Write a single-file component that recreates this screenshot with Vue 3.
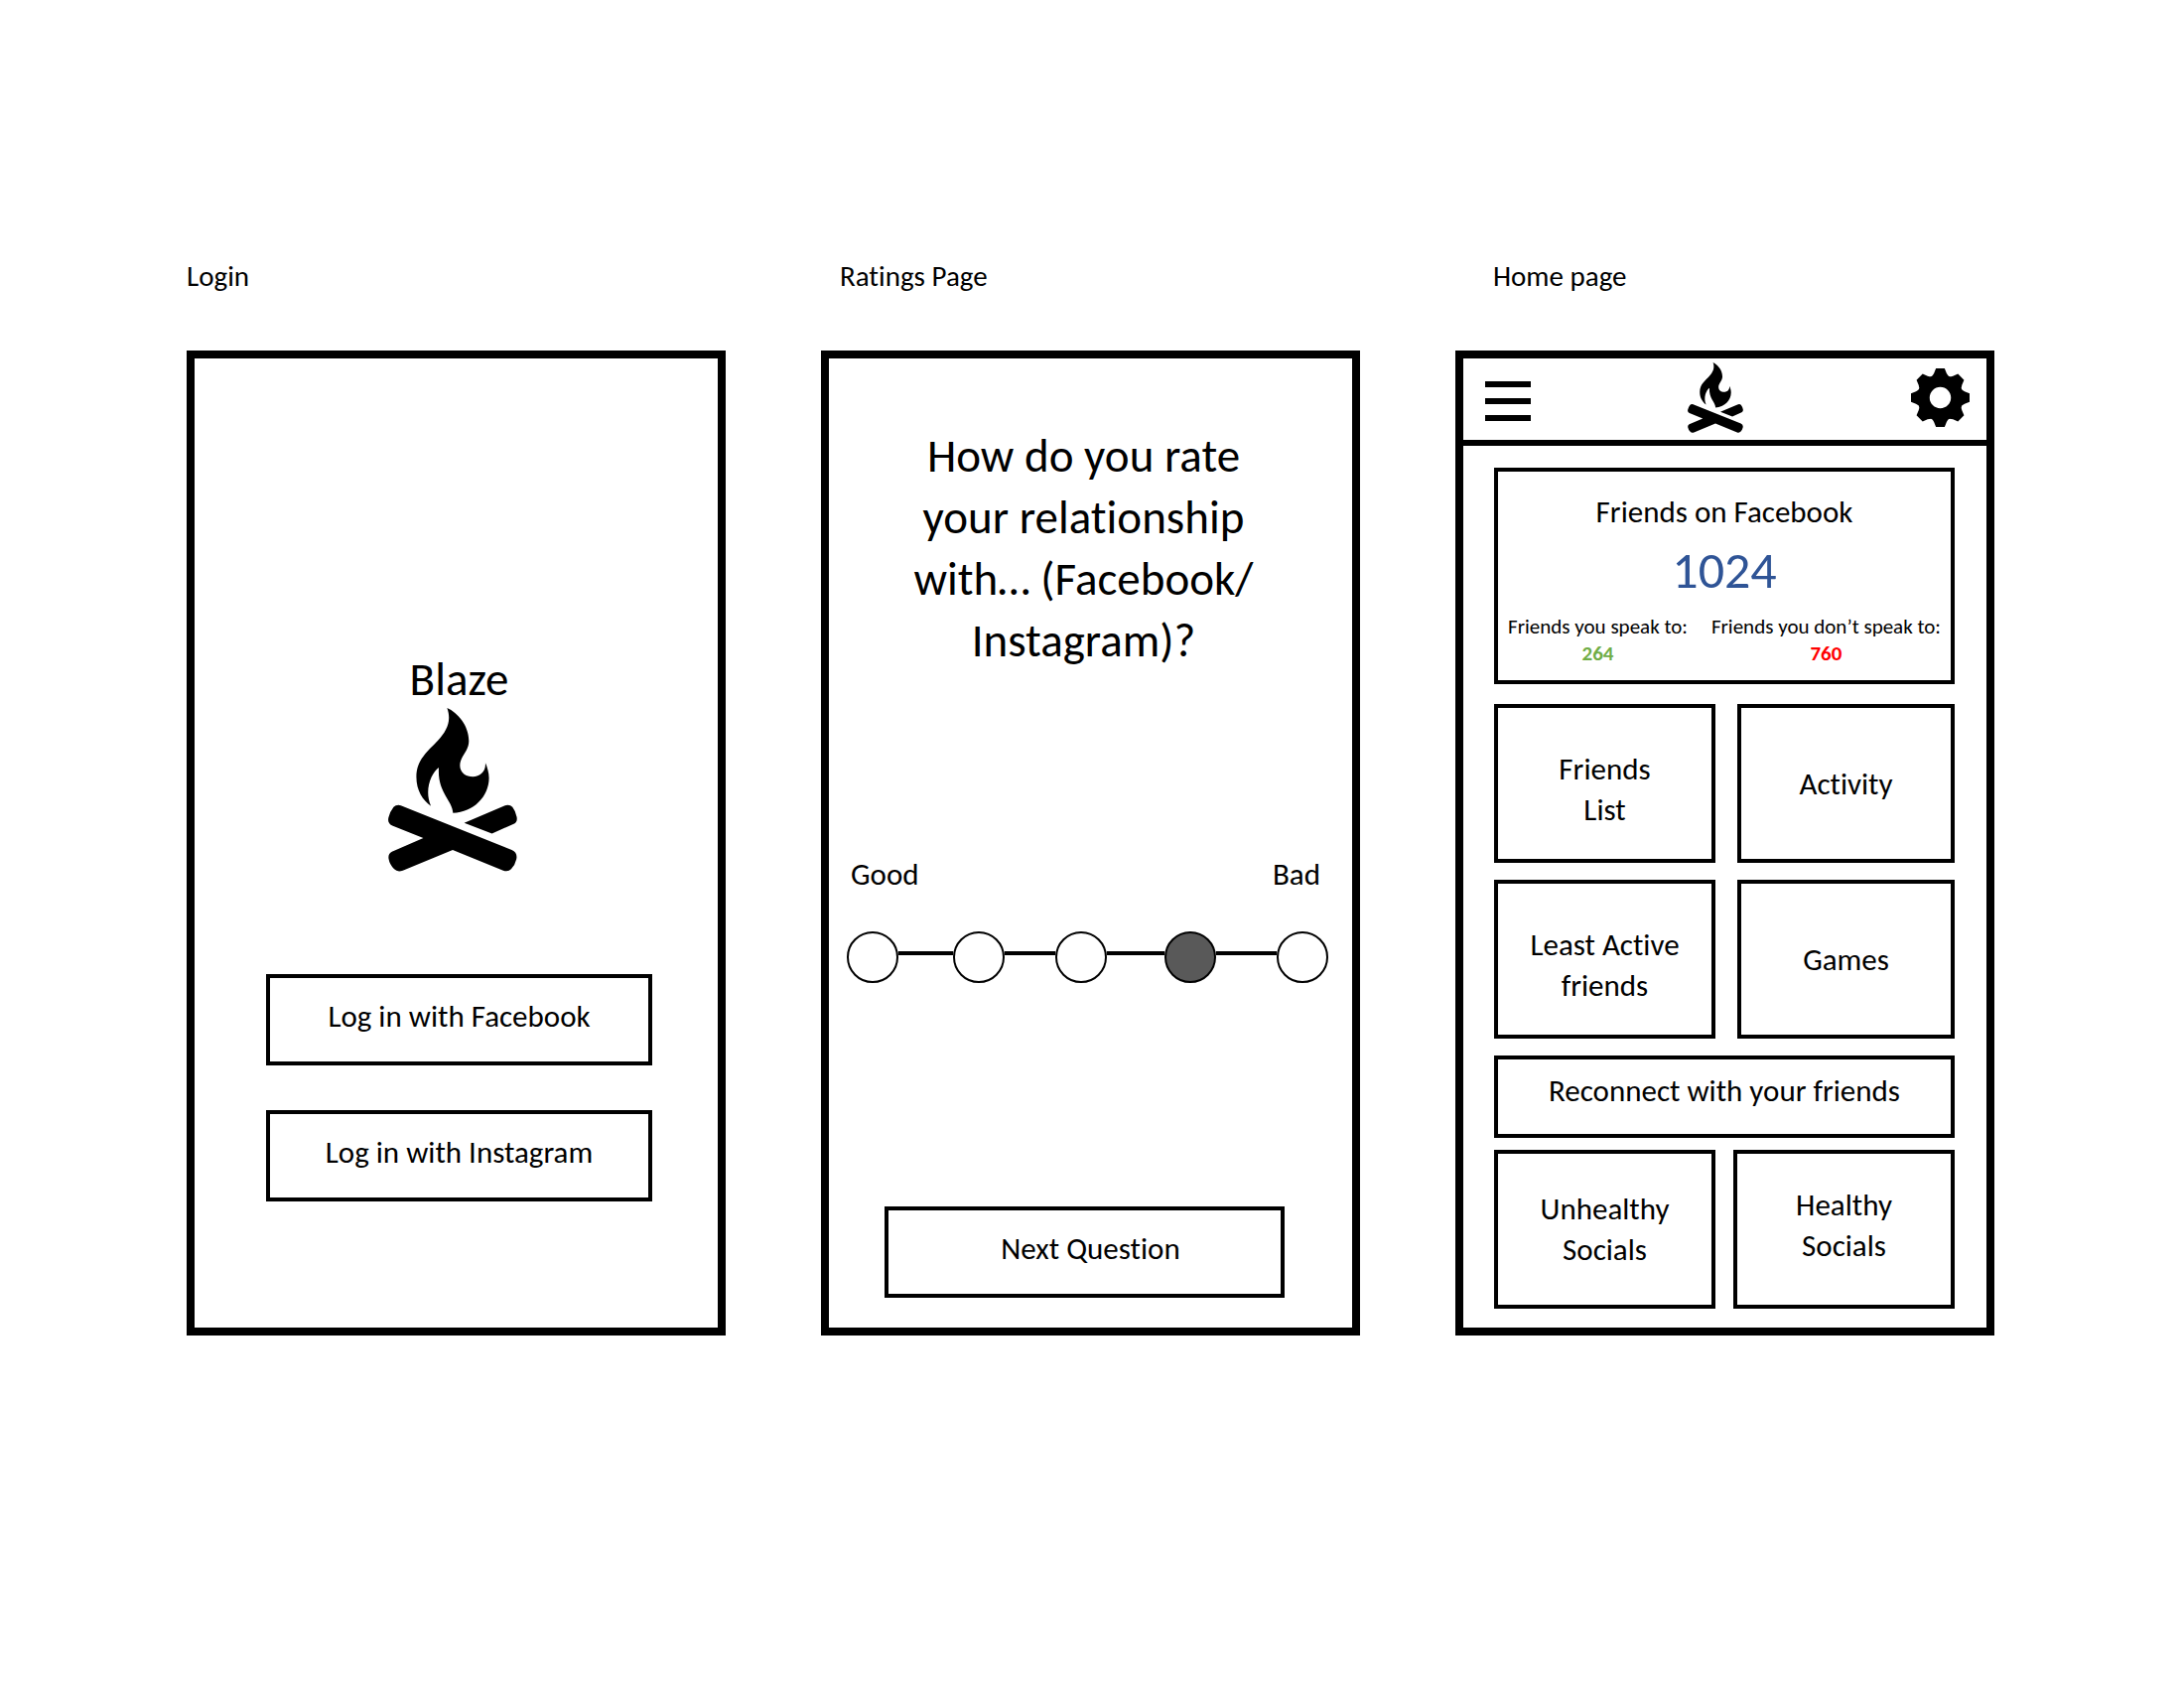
<script setup>
import { ref } from 'vue'

const rating = ref(4)

// gap: relative length of the connector that precedes the step
const steps = [
  { value: 1, gap: 0 },
  { value: 2, gap: 55 },
  { value: 3, gap: 51 },
  { value: 4, gap: 58 },
  { value: 5, gap: 61 }
]

const teeth = [0, 45, 90, 135, 180, 225, 270, 315]
</script>

<template>
  <div class="board">
    <svg class="defs" aria-hidden="true">
      <symbol id="campfire" viewBox="92 222 390 496">
        <path d="M270 222 C302 236 336 275 336 322 C336 354 309 368 309 396 C309 418 328 430 348 430 C370 430 388 415 386 388 C392 402 397 418 397 434 C397 490 350 538 288 540 C286 500 240 478 245 402 C222 418 200 470 221 519 C196 500 177 472 177 430 C177 375 218 348 243 320 C268 292 285 262 270 222Z" />
        <path d="M130 517 L466 652 Q484 660 480 680 Q476 698 464 710 Q455 719 440 714 L287 652 L136 714 Q120 720 110 710 Q96 696 93 678 Q91 663 103 657 L198 616 L104 578 Q88 570 93 553 Q97 536 108 522 Q116 514 130 517Z" />
        <path d="M322 570 L442 519 Q458 512 468 522 Q478 535 481 552 Q484 567 472 573 L406 602Z" />
      </symbol>
    </svg>

    <header class="titles">
      <h2 id="t-login">Login</h2>
      <h2 id="t-ratings">Ratings Page</h2>
      <h2 id="t-home">Home page</h2>
    </header>

    <main class="screens">
      <section class="screen login" aria-labelledby="t-login">
        <h1 class="brand">Blaze</h1>
        <svg class="fire-large" aria-hidden="true"><use href="#campfire" /></svg>
        <div class="login-actions">
          <button type="button" class="box action">Log in with Facebook</button>
          <button type="button" class="box action">Log in with Instagram</button>
        </div>
      </section>

      <section class="screen ratings" aria-labelledby="t-ratings">
        <p id="question" class="question">
          How do you rate<br />your relationship<br />with… (Facebook/<br />Instagram)?
        </p>
        <div class="scale-ends"><span>Good</span><span>Bad</span></div>
        <div class="scale" role="radiogroup" aria-labelledby="question">
          <template v-for="s in steps" :key="s.value">
            <span v-if="s.gap" class="link" :style="{ flexGrow: s.gap }"></span>
            <input v-model="rating" class="dot" type="radio" name="rating" :value="s.value" :aria-label="`Rating ${s.value} of 5`" />
          </template>
        </div>
        <button type="button" class="box action next">Next Question</button>
      </section>

      <section class="screen home" aria-labelledby="t-home">
        <div class="topbar">
          <button type="button" class="icon menu" aria-label="Menu"><i></i><i></i><i></i></button>
          <svg class="fire-small" aria-hidden="true"><use href="#campfire" /></svg>
          <button type="button" class="icon" aria-label="Settings">
            <svg class="gear" viewBox="-88 -88 176 176" aria-hidden="true">
              <circle r="50" fill="none" stroke="#000" stroke-width="36" />
              <path v-for="a in teeth" :key="a" :transform="`rotate(${a})`" d="M-32 -58 Q-22 -66 -19 -73 L-13 -88 H13 L19 -73 Q22 -66 32 -58Z" />
            </svg>
          </button>
        </div>

        <div class="content">
          <div class="box card">
            <div class="card-title">Friends on Facebook</div>
            <div class="total">1024</div>
            <div class="stats">
              <div>Friends you speak to:<b class="good">264</b></div>
              <div>Friends you don’t speak to:<b class="bad">760</b></div>
            </div>
          </div>
          <div class="row">
            <button type="button" class="box tile low">Friends<br />List</button>
            <button type="button" class="box tile">Activity</button>
          </div>
          <div class="row">
            <button type="button" class="box tile low">Least Active<br />friends</button>
            <button type="button" class="box tile">Games</button>
          </div>
          <button type="button" class="box reconnect">Reconnect with your friends</button>
          <div class="row tight">
            <button type="button" class="box tile">Unhealthy<br />Socials</button>
            <button type="button" class="box tile high">Healthy<br />Socials</button>
          </div>
        </div>
      </section>
    </main>
  </div>
</template>

<style>
body {
  margin: 0;
  background: #fff;
}
</style>

<style scoped>
.board {
  font-family: Carlito, Calibri, Lato, sans-serif;
  font-variant-ligatures: none;
  color: #000;
  padding: 260px 0 0 188px;
}
.board *,
.board {
  box-sizing: border-box;
}
.defs {
  position: absolute;
  width: 0;
  height: 0;
}
.titles {
  display: grid;
  grid-template-columns: repeat(3, 1fr);
  padding-right: 38px;
  height: 93px;
}
.titles h2 {
  margin: 0;
  font-size: 29px;
  line-height: 36px;
  font-weight: 400;
}
.screens {
  display: grid;
  grid-template-columns: repeat(3, 1fr);
  gap: 96px;
  padding-right: 191px;
}
.screen {
  border: 8px solid #000;
  min-height: 992px;
  display: flex;
  flex-direction: column;
}
.box {
  border: 4px solid #000;
  background: #fff;
  color: #000;
  font-family: inherit;
  font-variant-ligatures: inherit;
  font-size: 31px;
  line-height: 41px;
  padding: 0;
  text-align: center;
}
.action {
  height: 92px;
  padding-bottom: 8px;
}

/* Login */
.login {
  align-items: center;
  padding: 0 66px 0 72px;
}
.brand {
  margin: 294px 0 0;
  font-size: 47px;
  line-height: 58px;
  font-weight: 400;
}
.fire-large {
  width: 130px;
  height: 165px;
  margin-right: 14px;
}
.login-actions {
  align-self: stretch;
  display: flex;
  flex-direction: column;
  gap: 45px;
  padding-top: 103px;
}

/* Ratings */
.question {
  margin: 67px 14px 0 0;
  font-size: 47px;
  line-height: 62px;
  text-align: center;
}
.scale-ends {
  display: flex;
  justify-content: space-between;
  margin: 184px 32px 0 22px;
  font-size: 31px;
  line-height: 41px;
}
.scale {
  display: flex;
  align-items: center;
  margin: 37px 24px 0 18px;
}
.dot {
  appearance: none;
  flex: none;
  width: 52px;
  height: 52px;
  margin: 0;
  border: 2px solid #000;
  border-radius: 50%;
  background: #fff;
}
.dot:checked {
  background: #595959;
}
.link {
  flex: 1 1 0;
  height: 4px;
  margin-bottom: 8px;
  background: #000;
}
.next {
  margin: 225px 68px 0 56px;
  padding-left: 12px;
}

/* Home */
.topbar {
  display: flex;
  justify-content: space-between;
  align-items: center;
  height: 88px;
  padding: 0 17px 4px 22px;
  border-bottom: 6px solid #000;
}
.icon {
  border: 0;
  padding: 0;
  background: none;
  display: flex;
}
.menu {
  flex-direction: column;
  gap: 11px;
  padding-top: 8px;
}
.menu i {
  width: 46px;
  height: 6px;
  background: #000;
}
.fire-small {
  width: 56px;
  height: 71px;
  margin-right: 12px;
}
.gear {
  width: 59px;
  height: 59px;
}
.content {
  display: flex;
  flex-direction: column;
  padding: 22px 32px 16px 31px;
}
.card {
  height: 218px;
  margin-bottom: 20px;
  padding-top: 20px;
}
.total {
  font-size: 52px;
  line-height: 60px;
  margin-top: 8px;
  color: #2f5496;
}
.stats {
  display: flex;
  justify-content: space-between;
  padding: 14px 10px 0;
  font-size: 21px;
  line-height: 27px;
}
.stats b {
  display: block;
}
.good {
  color: #70ad47;
}
.bad {
  color: #f00;
}
.row {
  display: flex;
  gap: 22px;
  margin-bottom: 17px;
}
.tile {
  flex: 1;
  height: 160px;
}
.tile:first-child {
  flex: 0 0 223px;
}
.low {
  padding-top: 12px;
}
.high {
  padding-bottom: 8px;
}
.reconnect {
  height: 83px;
  padding-bottom: 12px;
  margin-bottom: 12px;
}
.tight {
  gap: 18px;
  margin-bottom: 0;
}
</style>
